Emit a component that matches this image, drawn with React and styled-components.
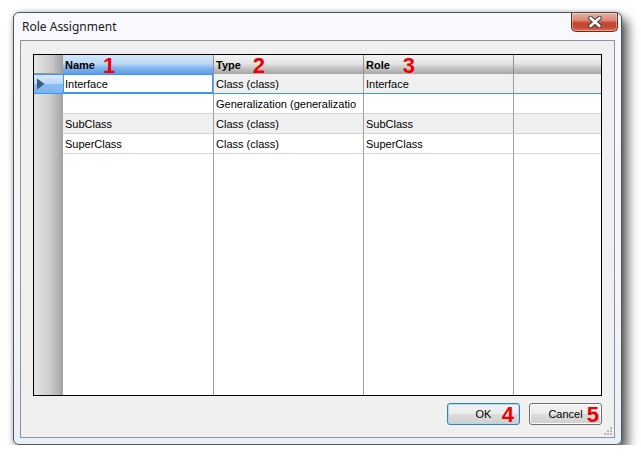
import React from "react";
import styled, { createGlobalStyle } from "styled-components";

const Global = createGlobalStyle`
  html, body { margin: 0; padding: 0; background: #ffffff; }
  body { padding: 12px 0 0 13px; font-family: "Liberation Sans", Arial, sans-serif; }
`;

const Window = styled.div`
  width: 609px;
  height: 433px;
  box-sizing: border-box;
  border: 1px solid #4d5560;
  border-radius: 6px;
  background: linear-gradient(180deg, #f7f9fc 0%, #f3f6fa 60%, #e9f0f8 100%);
  box-shadow: 6px 7px 11px rgba(0, 0, 0, 0.62), 0 0 5px rgba(0, 0, 0, 0.25);
  display: flex;
  flex-direction: column;
`;

const TitleBar = styled.div`
  height: 27px;
  display: flex;
  align-items: flex-start;
  justify-content: space-between;
  padding: 0 3px 0 8px;
`;

const Title = styled.div`
  font-family: "Noto Sans", "Segoe UI", sans-serif;
  font-size: 12px;
  color: #1a1a1a;
  line-height: 27px;
`;

const CloseButton = styled.div`
  width: 47px;
  height: 19px;
  box-sizing: border-box;
  border: 1px solid #6e2a20;
  border-top: none;
  border-radius: 0 0 5px 5px;
  background: linear-gradient(180deg, #e9b2a6 0%, #d98979 40%, #c4442f 55%, #c74b35 80%, #d8755f 100%);
  display: flex;
  align-items: center;
  justify-content: center;
  box-shadow: inset 0 0 0 1px rgba(255, 220, 210, 0.45);
`;

const Client = styled.div`
  flex: 1;
  margin: 0 6px 6px 6px;
  border: 1px solid #8f9296;
  background: #f0f0f0;
  padding: 13px 12px 0 12px;
  display: flex;
  flex-direction: column;
  position: relative;
`;

const Grid = styled.div`
  height: 342px;
  box-sizing: border-box;
  border: 1px solid #000;
  background: #ffffff;
  display: grid;
  grid-template-columns: 29px 151px 150px 150px 1fr;
  grid-template-rows: 19px repeat(4, 20px) 1fr;
  font-size: 11px;
  color: #000;
`;

const Corner = styled.div`
  background: linear-gradient(90deg, #e6e6e6 0%, #c9c9c9 60%, #9f9f9f 100%);
  border-bottom: 1px solid #9a9a9a;
`;

const HeaderCell = styled.div`
  background: ${(p) =>
    p.$active
      ? "linear-gradient(180deg, #d6e8fb 0%, #bcd8f6 45%, #7fb3ec 70%, #5d9de5 100%)"
      : "linear-gradient(180deg, #f4f4f4 0%, #e4e4e4 45%, #c4c4c4 70%, #a7a7a7 100%)"};
  border-right: ${(p) => (p.$last ? "none" : "1px solid #909090")};
  font-weight: bold;
  display: flex;
  align-items: center;
  padding-left: 2px;
  white-space: nowrap;
  position: relative;
`;

const Marker = styled.span`
  font-family: "Liberation Sans", Arial, sans-serif;
  font-weight: bold;
  font-size: 22px;
  color: #ee0000;
  line-height: 1;
  margin-left: ${(p) => p.$gap || 9}px;
  margin-top: 2px;
`;

const RowHeader = styled.div`
  background: ${(p) =>
    p.$current
      ? "linear-gradient(180deg, #dcebfc 0%, #b9d7f7 48%, #8dbff1 52%, #7ab3ee 100%)"
      : "linear-gradient(90deg, #e4e4e4 0%, #cdcdcd 55%, #a2a2a2 100%)"};
  border-top: ${(p) => (p.$current ? "1px solid #3399ff" : "none")};
  border-bottom: ${(p) => (p.$current ? "1px solid #3399ff" : "none")};
  display: flex;
  align-items: center;
  padding-left: 2px;
`;

const Cell = styled.div`
  background: ${(p) => (p.$focus ? "#ffffff" : p.$alt ? "#f0f0f0" : "#ffffff")};
  border-right: ${(p) => (p.$last ? "none" : "1px solid #a0a0a0")};
  border-bottom: 1px solid ${(p) => (p.$current ? "#3399ff" : "#d4d4d4")};
  box-shadow: ${(p) => (p.$focus ? "inset 0 0 0 1px #3399ff" : "none")};
  display: flex;
  align-items: center;
  padding-left: 2px;
  white-space: nowrap;
  overflow: hidden;
`;

const Filler = styled.div`
  background: ${(p) => (p.$header ? "linear-gradient(90deg, #e4e4e4 0%, #cdcdcd 55%, #a2a2a2 100%)" : "#ffffff")};
  border-right: ${(p) => (p.$last || p.$header ? "none" : "1px solid #a0a0a0")};
`;

const ButtonRow = styled.div`
  margin-top: 7px;
  display: flex;
  justify-content: flex-end;
  gap: 9px;
`;

const Button = styled.div`
  width: 73px;
  height: 22px;
  box-sizing: border-box;
  border: 1px solid ${(p) => (p.$default ? "#3c7fb1" : "#707070")};
  border-radius: 3px;
  background: linear-gradient(180deg, #f3f3f3 0%, #ebebeb 49%, #dddddd 50%, #cfcfcf 100%);
  box-shadow: ${(p) =>
    p.$default ? "inset 0 0 0 1px #a8dcf5" : "inset 0 0 0 1px #fbfbfb"};
  display: flex;
  align-items: center;
  justify-content: center;
  font-size: 11px;
  color: #000;
  position: relative;
`;

const ButtonMarker = styled.span`
  position: absolute;
  right: ${(p) => p.$right}px;
  top: 0px;
  font-weight: bold;
  font-size: 22px;
  line-height: 21px;
  color: #ee0000;
`;

const Grip = styled.svg`
  position: absolute;
  right: 1px;
  bottom: 1px;
`;

const rows = [
  { name: "Interface", type: "Class (class)", role: "Interface" },
  { name: "", type: "Generalization (generalizatio", role: "" },
  { name: "SubClass", type: "Class (class)", role: "SubClass" },
  { name: "SuperClass", type: "Class (class)", role: "SuperClass" },
];

export default function App() {
  return (
    <>
      <Global />
      <Window>
        <TitleBar>
          <Title>Role Assignment</Title>
          <CloseButton>
            <svg width="16" height="12" viewBox="0 0 16 12">
              <path d="M3.5 2 L12.5 10 M12.5 2 L3.5 10" stroke="#3a3a3a" strokeWidth="4.4" strokeLinecap="round" />
              <path d="M3.5 2 L12.5 10 M12.5 2 L3.5 10" stroke="#ffffff" strokeWidth="2.6" strokeLinecap="round" />
            </svg>
          </CloseButton>
        </TitleBar>
        <Client>
          <Grid>
            <Corner />
            <HeaderCell $active>
              Name<Marker $gap={8}>1</Marker>
            </HeaderCell>
            <HeaderCell>
              Type<Marker $gap={12}>2</Marker>
            </HeaderCell>
            <HeaderCell>
              Role<Marker $gap={13}>3</Marker>
            </HeaderCell>
            <HeaderCell $last />
            {rows.map((r, i) => {
              const current = i === 0;
              const alt = i % 2 === 0;
              return (
                <React.Fragment key={i}>
                  <RowHeader $current={current}>
                    {current && (
                      <svg width="9" height="12" viewBox="0 0 9 12">
                        <path d="M1 0.5 L8.5 6 L1 11.5 Z" fill="#3e5c7d" />
                      </svg>
                    )}
                  </RowHeader>
                  <Cell $alt={alt} $current={current} $focus={current}>{r.name}</Cell>
                  <Cell $alt={alt} $current={current}>{r.type}</Cell>
                  <Cell $alt={alt} $current={current}>{r.role}</Cell>
                  <Cell $alt={alt} $current={current} $last />
                </React.Fragment>
              );
            })}
            <Filler $header />
            <Filler />
            <Filler />
            <Filler />
            <Filler $last />
          </Grid>
          <ButtonRow>
            <Button $default>
              OK<ButtonMarker $right={5}>4</ButtonMarker>
            </Button>
            <Button>
              Cancel<ButtonMarker $right={2}>5</ButtonMarker>
            </Button>
          </ButtonRow>
          <Grip width="11" height="11" viewBox="0 0 11 11">
            {[
              [8, 0], [8, 3], [5, 3], [8, 6], [5, 6], [2, 6],
            ].map(([x, y], k) => (
              <rect key={k} x={x} y={y + 2} width="2" height="2" fill="#b8b8b8" />
            ))}
          </Grip>
        </Client>
      </Window>
    </>
  );
}
